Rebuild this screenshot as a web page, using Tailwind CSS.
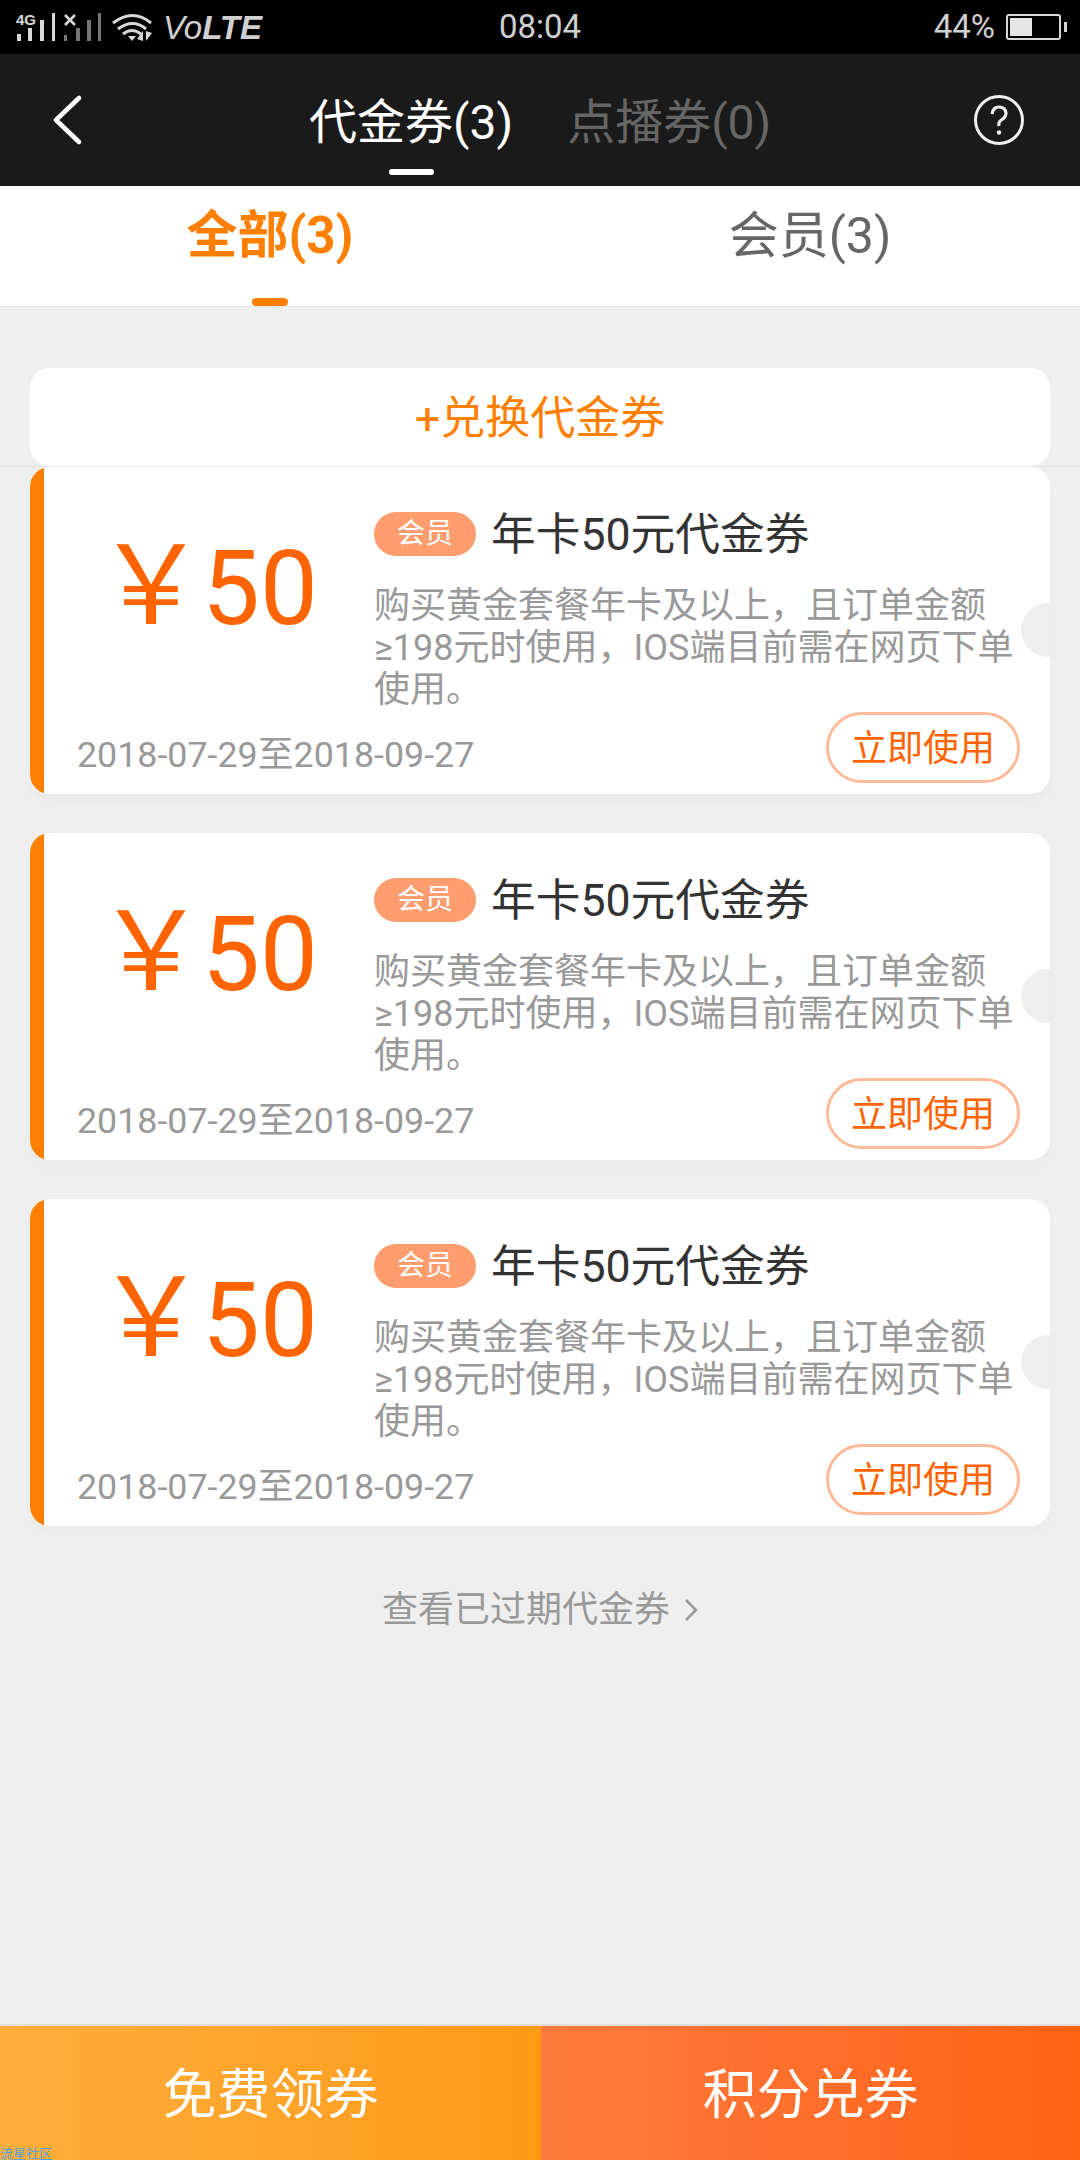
<!DOCTYPE html>
<html lang="zh-CN">
<head>
    <meta charset="UTF-8">
    <meta name="viewport" content="width=device-width, initial-scale=1.0">
    <title>代金券</title>
    <script src="https://cdn.jsdelivr.net/npm/@tailwindcss/browser@4"></script>
</head>
<body class="bg-[#efefef] font-['Roboto','Noto_Sans_CJK_SC',sans-serif]">
    <div class="flex flex-col h-[2160px] w-[1080px] overflow-hidden">
        <!-- Status bar -->
        <div class="flex items-center h-[54px] bg-black text-[#d0d0d0] shrink-0">
            <div class="flex-1 flex items-center">
                <svg class="ml-[16px] w-[140px] h-[54px]" viewBox="0 0 140 54">
                    <text x="0" y="25" font-size="15" font-weight="700" font-family="Liberation Sans" fill="#d8d8d8">4G</text>
                    <g fill="#d8d8d8">
                        <rect x="1" y="34" width="4" height="7"/><rect x="12" y="28" width="4" height="13"/><rect x="24" y="20" width="4" height="21"/><rect x="36" y="13" width="3" height="28"/>
                    </g>
                    <path d="M49 15l10 10M59 15l-10 10" stroke="#d8d8d8" stroke-width="2.6"/>
                    <g fill="#777">
                        <rect x="48" y="35" width="3" height="6"/><rect x="60" y="28" width="4" height="13"/><rect x="71" y="20" width="4" height="21"/><rect x="82" y="13" width="3" height="28"/>
                    </g>
                    <g fill="none" stroke="#d8d8d8" stroke-width="3">
                        <path d="M97 23q20-15 38 0"/><path d="M102 29q15-11 28 0"/><path d="M107 34q9-7 18 0"/>
                    </g>
                    <path d="M112 36h8l-4 5z" fill="#d8d8d8"/>
                    <path d="M127 41v-10l-6 8zM130 31v10l6-8z" fill="#d8d8d8"/>
                </svg>
                <div class="ml-[7px] text-[33px] italic leading-none font-['Liberation_Sans',sans-serif]">Vo<span class="font-bold">LTE</span></div>
            </div>
            <div class="text-[33px]">08:04</div>
            <div class="flex-1 flex items-center justify-end">
                <div class="text-[33px]">44%</div>
                <div class="relative ml-[11px] mr-[19px] w-[55px] h-[26px] rounded-[3px] border-2 border-[#d8d8d8] p-[2px]">
                    <div class="w-[22px] h-full bg-[#e6e6e6]"></div>
                    <div class="absolute right-[-8px] top-[6px] w-[3px] h-[10px] bg-[#d8d8d8]"></div>
                </div>
            </div>
        </div>

        <!-- Nav -->
        <div class="flex items-center h-[132px] bg-[#1a1a1a] shrink-0">
            <svg class="ml-[52px] w-[30px] h-[50px]" viewBox="0 0 30 50" fill="none" stroke="#fff" stroke-width="4.5" stroke-linecap="round" stroke-linejoin="round">
                <path d="M27 3L4 25l23 22"/>
            </svg>
            <div class="relative ml-[227px] mt-[6px] text-[48px] text-white leading-none">
                代金券(3)
                <div class="absolute left-[80px] top-[70px] w-[45px] h-[6px] rounded-full bg-white"></div>
            </div>
            <div class="ml-[54px] mt-[6px] text-[48px] text-[#666] leading-none">点播券(0)</div>
            <svg class="ml-auto mr-[56px] w-[50px] h-[50px]" viewBox="0 0 50 50" fill="none" stroke="#f0f0f0">
                <circle cx="25" cy="25" r="23.5" stroke-width="3"/>
                <path d="M18 19q1-7 7-7t7 6q0 4-4 6.5t-3 6.5" stroke-width="3.2"/>
                <circle cx="25" cy="37.5" r="2.2" fill="#f0f0f0" stroke="none"/>
            </svg>
        </div>

        <!-- Tabs -->
        <div class="flex h-[121px] bg-white border-b border-[#e5e5e5] shrink-0">
            <div class="relative flex-1 flex justify-center pt-[21px] text-[51px] font-bold text-[#ff7f00] leading-[58px]">
                全部(3)
                <div class="absolute bottom-0 left-[252px] w-[36px] h-[8px] rounded-full bg-[#ff7f00]"></div>
            </div>
            <div class="flex-1 flex justify-center pt-[21px] text-[50px] text-[#666] leading-[58px]">会员(3)</div>
        </div>

        <!-- Exchange -->
        <div class="px-[30px] pt-[61px] border-b border-[#e5e5e5] shrink-0">
            <div class="flex items-center justify-center h-[98px] pt-[4px] rounded-[20px] bg-white text-[45px] text-[#ff7f00]">+兑换代金券</div>
        </div>

        <!-- Coupons -->
        <div class="flex flex-col gap-[39px] px-[30px]">
            <div class="relative flex h-[327px] rounded-[20px] bg-white overflow-hidden shadow-[0_6px_8px_rgba(0,0,0,0.02)]">
                <div class="w-[14px] bg-[#ff7f00] shrink-0"></div>
                <div class="flex-1 flex flex-col">
                    <div class="flex pt-[44px]">
                        <div class="flex items-baseline w-[330px] h-[140px] pl-[52px] pt-[7px] text-[103px] leading-[116px] text-[#ff6400] whitespace-nowrap shrink-0"><span class="text-[110px] font-['Noto_Sans_CJK_SC',sans-serif]">￥</span><span class="ml-[-4px]">50</span></div>
                        <div>
                            <div class="flex items-center h-[44px]">
                                <span class="flex items-center justify-center w-[102px] h-[44px] mt-[1px] rounded-full bg-[#ff9d6f] text-white text-[28px]">会员</span>
                                <span class="ml-[15px] mt-[4px] text-[44.7px] text-[#333] leading-none">年卡50元代金券</span>
                            </div>
                            <p class="mt-[30px] text-[36px] leading-[42px] text-[#999] whitespace-nowrap">购买黄金套餐年卡及以上，且订单金额<br>≥198元时使用，IOS端目前需在网页下单<br>使用。</p>
                        </div>
                    </div>
                    <div class="mt-auto flex items-start justify-between pl-[33px] pr-[30px] pb-[11px]">
                        <span class="mt-[22px] text-[35.8px] leading-[42px] text-[#999]">2018-07-29至2018-09-27</span>
                        <span class="flex items-center justify-center w-[194px] h-[71px] pt-[2px] rounded-full border-[3px] border-[#ffbb99] text-[36px] text-[#ff6400]">立即使用</span>
                    </div>
                </div>
                <div class="absolute left-[991px] top-[136px] w-[54px] h-[54px] rounded-full bg-[#efefef]"></div>
            </div>

            <div class="relative flex h-[327px] rounded-[20px] bg-white overflow-hidden shadow-[0_6px_8px_rgba(0,0,0,0.02)]">
                <div class="w-[14px] bg-[#ff7f00] shrink-0"></div>
                <div class="flex-1 flex flex-col">
                    <div class="flex pt-[44px]">
                        <div class="flex items-baseline w-[330px] h-[140px] pl-[52px] pt-[7px] text-[103px] leading-[116px] text-[#ff6400] whitespace-nowrap shrink-0"><span class="text-[110px] font-['Noto_Sans_CJK_SC',sans-serif]">￥</span><span class="ml-[-4px]">50</span></div>
                        <div>
                            <div class="flex items-center h-[44px]">
                                <span class="flex items-center justify-center w-[102px] h-[44px] mt-[1px] rounded-full bg-[#ff9d6f] text-white text-[28px]">会员</span>
                                <span class="ml-[15px] mt-[4px] text-[44.7px] text-[#333] leading-none">年卡50元代金券</span>
                            </div>
                            <p class="mt-[30px] text-[36px] leading-[42px] text-[#999] whitespace-nowrap">购买黄金套餐年卡及以上，且订单金额<br>≥198元时使用，IOS端目前需在网页下单<br>使用。</p>
                        </div>
                    </div>
                    <div class="mt-auto flex items-start justify-between pl-[33px] pr-[30px] pb-[11px]">
                        <span class="mt-[22px] text-[35.8px] leading-[42px] text-[#999]">2018-07-29至2018-09-27</span>
                        <span class="flex items-center justify-center w-[194px] h-[71px] pt-[2px] rounded-full border-[3px] border-[#ffbb99] text-[36px] text-[#ff6400]">立即使用</span>
                    </div>
                </div>
                <div class="absolute left-[991px] top-[136px] w-[54px] h-[54px] rounded-full bg-[#efefef]"></div>
            </div>

            <div class="relative flex h-[327px] rounded-[20px] bg-white overflow-hidden shadow-[0_6px_8px_rgba(0,0,0,0.02)]">
                <div class="w-[14px] bg-[#ff7f00] shrink-0"></div>
                <div class="flex-1 flex flex-col">
                    <div class="flex pt-[44px]">
                        <div class="flex items-baseline w-[330px] h-[140px] pl-[52px] pt-[7px] text-[103px] leading-[116px] text-[#ff6400] whitespace-nowrap shrink-0"><span class="text-[110px] font-['Noto_Sans_CJK_SC',sans-serif]">￥</span><span class="ml-[-4px]">50</span></div>
                        <div>
                            <div class="flex items-center h-[44px]">
                                <span class="flex items-center justify-center w-[102px] h-[44px] mt-[1px] rounded-full bg-[#ff9d6f] text-white text-[28px]">会员</span>
                                <span class="ml-[15px] mt-[4px] text-[44.7px] text-[#333] leading-none">年卡50元代金券</span>
                            </div>
                            <p class="mt-[30px] text-[36px] leading-[42px] text-[#999] whitespace-nowrap">购买黄金套餐年卡及以上，且订单金额<br>≥198元时使用，IOS端目前需在网页下单<br>使用。</p>
                        </div>
                    </div>
                    <div class="mt-auto flex items-start justify-between pl-[33px] pr-[30px] pb-[11px]">
                        <span class="mt-[22px] text-[35.8px] leading-[42px] text-[#999]">2018-07-29至2018-09-27</span>
                        <span class="flex items-center justify-center w-[194px] h-[71px] pt-[2px] rounded-full border-[3px] border-[#ffbb99] text-[36px] text-[#ff6400]">立即使用</span>
                    </div>
                </div>
                <div class="absolute left-[991px] top-[136px] w-[54px] h-[54px] rounded-full bg-[#efefef]"></div>
            </div>
        </div>

        <!-- Expired link -->
        <div class="flex items-center justify-center gap-[14px] mt-[63px] text-[36px] leading-[42px] text-[#999]">
            查看已过期代金券
            <svg class="w-[14px] h-[24px]" viewBox="0 0 14 24" fill="none" stroke="#999" stroke-width="2.5"><path d="M2 2l10 10L2 22"/></svg>
        </div>

        <!-- Bottom buttons -->
        <div class="relative flex mt-auto h-[136px] border-t-2 border-[#dedede] shrink-0 text-[54px] text-white">
            <div class="flex items-center justify-center w-[541px] pt-[4px] bg-linear-to-r from-[#ffae3b] to-[#ff9a14]">免费领券</div>
            <div class="flex-1 flex items-center justify-center pt-[4px] bg-linear-to-r from-[#ff7a3c] to-[#ff6210]">积分兑券</div>
            <div class="absolute left-0 bottom-0 text-[13px] leading-[13px] text-[#4aa3df]">流星社区</div>
        </div>
    </div>
</body>
</html>
